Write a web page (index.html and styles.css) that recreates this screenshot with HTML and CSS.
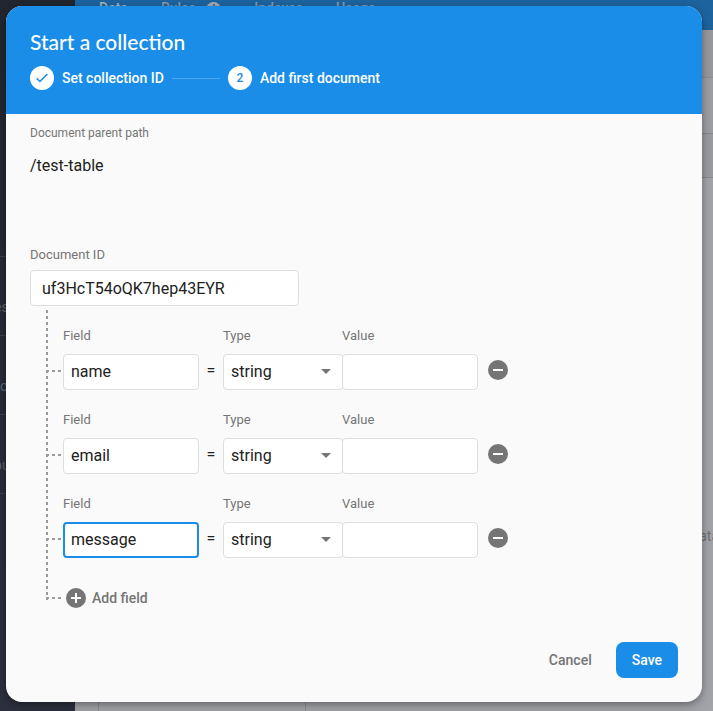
FILE: index.html
```html
<!DOCTYPE html>
<html lang="en">
<head>
<meta charset="utf-8">
<meta name="viewport" content="width=device-width, initial-scale=1">
<title>Start a collection</title>
<link rel="stylesheet" href="styles.css">
</head>
<body>
<div class="console" aria-hidden="true">
  <div class="sidebar">
    <div class="sidebar-item sidebar-clipped">es</div>
    <div class="sidebar-item">o</div>
    <div class="sidebar-item sidebar-clipped">ou</div>
    <div class="sidebar-item"></div>
  </div>
  <div class="content">
    <div class="tabs">
      <span class="tab tab-current">Data</span>
      <span class="tab">Rules <span class="tab-badge">!</span></span>
      <span class="tab">Indexes</span>
      <span class="tab">Usage</span>
    </div>
    <div class="toolbar"></div>
    <div class="path-bar"></div>
    <div class="panel-head"></div>
    <div class="panels">
      <div class="panel-gutter"></div>
      <div class="panel-list"></div>
      <div class="panel-data"><span>ata</span></div>
    </div>
  </div>
</div>

<div class="overlay">
  <form class="dialog" role="dialog" aria-labelledby="dialog-title">
    <header class="dialog-header">
      <h1 class="dialog-title" id="dialog-title">Start a collection</h1>
      <ol class="steps">
        <li class="step">
          <span class="step-mark"><svg width="14" height="14" viewBox="0 0 14 14"><path d="M1.7 7.4 4.9 10.5 12.3 3.1" fill="none" stroke="currentColor" stroke-width="1.5"/></svg></span>
          <span>Set collection ID</span>
        </li>
        <li class="step">
          <span class="step-mark">2</span>
          <span>Add first document</span>
        </li>
      </ol>
    </header>

    <div class="dialog-body">
      <div class="caption">Document parent path</div>
      <div class="path">/test-table</div>
      <label class="label" for="doc-id">Document ID</label>
      <input class="control doc-id" id="doc-id" type="text" value="uf3HcT54oQK7hep43EYR">

      <div class="tree">
        <div class="field-row">
          <label class="label name-label" for="name-1">Field</label>
          <label class="label type-label" for="type-1">Type</label>
          <label class="label value-label" for="value-1">Value</label>
          <span class="branch"></span>
          <input class="control" id="name-1" type="text" value="name">
          <span class="equals">=</span>
          <span class="select"><select class="control" id="type-1"><option>string</option></select></span>
          <input class="control" id="value-1" type="text">
          <button class="remove" type="button" aria-label="Remove field"><svg width="20" height="20" viewBox="0 0 20 20"><circle cx="10" cy="10" r="10" fill="#757575"/><path d="M5 10h10" stroke="#fff" stroke-width="2"/></svg></button>
        </div>
        <div class="field-row">
          <label class="label name-label" for="name-2">Field</label>
          <label class="label type-label" for="type-2">Type</label>
          <label class="label value-label" for="value-2">Value</label>
          <span class="branch"></span>
          <input class="control" id="name-2" type="text" value="email">
          <span class="equals">=</span>
          <span class="select"><select class="control" id="type-2"><option>string</option></select></span>
          <input class="control" id="value-2" type="text">
          <button class="remove" type="button" aria-label="Remove field"><svg width="20" height="20" viewBox="0 0 20 20"><circle cx="10" cy="10" r="10" fill="#757575"/><path d="M5 10h10" stroke="#fff" stroke-width="2"/></svg></button>
        </div>
        <div class="field-row">
          <label class="label name-label" for="name-3">Field</label>
          <label class="label type-label" for="type-3">Type</label>
          <label class="label value-label" for="value-3">Value</label>
          <span class="branch"></span>
          <input class="control control-active" id="name-3" type="text" value="message">
          <span class="equals">=</span>
          <span class="select"><select class="control" id="type-3"><option>string</option></select></span>
          <input class="control" id="value-3" type="text">
          <button class="remove" type="button" aria-label="Remove field"><svg width="20" height="20" viewBox="0 0 20 20"><circle cx="10" cy="10" r="10" fill="#757575"/><path d="M5 10h10" stroke="#fff" stroke-width="2"/></svg></button>
        </div>
        <div class="add-row">
          <span class="branch"></span>
          <button class="add" type="button"><svg width="20" height="20" viewBox="0 0 20 20"><circle cx="10" cy="10" r="10" fill="#757575"/><path d="M5 10h10M10 5v10" stroke="#fff" stroke-width="2"/></svg>Add field</button>
        </div>
      </div>
    </div>

    <footer class="actions">
      <button class="button" type="button">Cancel</button>
      <button class="button button-primary" type="button">Save</button>
    </footer>
  </form>
</div>
</body>
</html>
```
FILE: styles.css
```css
* {
  box-sizing: border-box;
}

body {
  margin: 0;
  font-family: Roboto, "Liberation Sans", sans-serif;
  color: #212121;
}

button,
input,
select {
  font: inherit;
  color: inherit;
}

/* Dimmed console behind the dialog */
.console {
  position: fixed;
  inset: 0;
  display: grid;
  grid-template-columns: 75px 1fr;
  overflow: hidden;
}

.sidebar {
  padding-top: 256px;
  overflow: hidden;
  background: linear-gradient(#22262f, #2d313f);
  color: #5f6671;
  font-size: 14px;
}

.sidebar-item {
  height: 79px;
  padding-top: 41px;
  border-top: 1px solid #3b3f4b;
  line-height: 18px;
}

.sidebar-clipped {
  text-indent: -6px;
}

.content {
  display: flex;
  flex-direction: column;
  min-width: 0;
  overflow: hidden;
  background: #a3a4a9;
}

.tabs {
  display: flex;
  gap: 33px;
  height: 30px;
  padding-left: 24px;
  background: #1d649f;
  color: #8a99a8;
  font-size: 14px;
  font-weight: 500;
  line-height: 16px;
}

.tab-current {
  color: #a9b4c0;
}

.tab-badge {
  display: inline-block;
  width: 15px;
  height: 15px;
  margin-left: 7px;
  border-radius: 50%;
  background: #aaaaaf;
  color: #1d649f;
  font-size: 12px;
  line-height: 15px;
  text-align: center;
}

.toolbar {
  height: 48px;
  background: #98999e;
  border-bottom: 1px solid #8e8f94;
}

.path-bar {
  height: 56px;
  background: #9d9ea3;
  border-bottom: 1px solid #87888c;
}

.panel-head {
  height: 44px;
  background: #9b9ca1;
  border-bottom: 1px solid #87888c;
}

.panels {
  flex: 1;
  display: grid;
  grid-template-columns: 24px 207px 1fr;
}

.panel-gutter,
.panel-list {
  border-right: 1px solid #8b8c91;
}

.panel-data {
  display: flex;
  justify-content: flex-end;
  align-items: center;
  margin-right: -6px;
  padding-top: 182px;
  color: #707176;
  font-size: 14px;
}

/* Dialog */
.overlay {
  position: fixed;
  inset: 0;
  padding: 6px 11px 9px 6px;
  display: flex;
}

.dialog {
  flex: 1;
  display: flex;
  flex-direction: column;
  overflow: hidden;
  border-radius: 16px;
  background: #fafafa;
  box-shadow: 0 2px 6px rgba(0, 0, 0, 0.3), 0 6px 16px rgba(0, 0, 0, 0.12);
}

.dialog-header {
  padding: 24px;
  background: #1a8de8;
  color: #fff;
}

.dialog-title {
  margin: 0 0 12px;
  font-family: Lato, Roboto, sans-serif;
  font-size: 21px;
  font-weight: 500;
  line-height: 24px;
}

.steps {
  display: flex;
  margin: 0;
  padding: 0;
  list-style: none;
  font-size: 14px;
  font-weight: 500;
}

.step {
  display: flex;
  align-items: center;
  gap: 8px;
}

.step + .step::before {
  content: "";
  width: 48px;
  height: 1px;
  margin-left: 8px;
  background: #4ea6ee;
}

.step-mark {
  display: flex;
  align-items: center;
  justify-content: center;
  width: 24px;
  height: 24px;
  border-radius: 50%;
  background: #fff;
  color: #1a8de8;
  font-size: 12px;
}

.dialog-body {
  flex: 1;
  padding: 10px 24px 0;
}

.caption {
  color: #757575;
  font-size: 12px;
  line-height: 18px;
}

.path {
  margin: 14px 0 69px;
  font-size: 16px;
  line-height: 20px;
}

.label {
  display: block;
  color: #757575;
  font-size: 13px;
  line-height: 20px;
}

.control {
  display: block;
  width: 100%;
  height: 36px;
  padding: 0 7px;
  border: 1px solid #dedede;
  border-radius: 4px;
  outline: 0;
  appearance: none;
  background: #fff;
  font-size: 16px;
}

.field-row .control {
  padding-bottom: 2px;
}

.field-row .control-active {
  padding: 0 6px 2px;
  border: 2px solid #1a8de8;
}

.doc-id {
  max-width: 269px;
  margin-top: 5px;
  padding: 0 11px;
}

.tree {
  position: relative;
  margin-left: 16px;
}

/* Dashed trunk joining the document to its fields */
.tree::before {
  content: "";
  position: absolute;
  top: 4px;
  bottom: 8px;
  left: 0;
  width: 2px;
  background: repeating-linear-gradient(#9a9a9a 0 3px, transparent 3px 6px);
}

.field-row {
  display: grid;
  grid-template-columns: 17px 136px 24px 119px 136px 40px;
  row-gap: 8px;
  align-items: center;
  padding-top: 20px;
}

.name-label {
  grid-column: 2;
}

.type-label {
  grid-column: 4;
}

.value-label {
  grid-column: 5 / 7;
}

.branch {
  width: 15px;
  height: 2px;
  background: repeating-linear-gradient(90deg, #9a9a9a 0 3px, transparent 3px 6px);
}

.field-row .branch {
  margin-bottom: 2px;
}

.equals {
  margin-bottom: 4px;
  font-size: 16px;
  text-align: center;
}

.select {
  position: relative;
  width: calc(100% + 1px);
}

.select::after {
  content: "";
  position: absolute;
  top: 15px;
  right: 12px;
  border: 5px solid transparent;
  border-top-color: #757575;
  border-bottom: 0;
  pointer-events: none;
}

.remove,
.add {
  display: flex;
  align-items: center;
  padding: 0;
  border: 0;
  background: none;
}

.remove {
  justify-self: center;
  margin-bottom: 4px;
}

.add {
  gap: 6px;
  margin-left: 5px;
  color: #757575;
  font-size: 14px;
  font-weight: 500;
}

.add-row {
  display: flex;
  align-items: center;
  padding-top: 30px;
}

.actions {
  display: flex;
  justify-content: flex-end;
  gap: 8px;
  padding: 24px;
}

.button {
  height: 36px;
  padding: 0 16px;
  border: 0;
  border-radius: 8px;
  background: none;
  color: #757575;
  font-size: 14px;
  font-weight: 500;
}

.button-primary {
  background: #1a8de8;
  color: #fff;
}
```
